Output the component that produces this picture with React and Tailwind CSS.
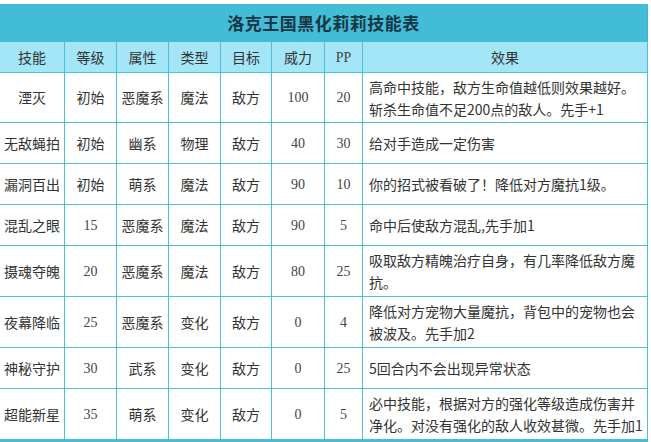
const grid = 'grid grid-cols-[65px_52px_52px_52px_51px_53px_38px_285px]'

const skills = [
  { name: '湮灭', level: '初始', attr: '恶魔系', type: '魔法', target: '敌方', power: '100', pp: '20', effect: ['高命中技能，敌方生命值越低则效果越好。', '斩杀生命值不足200点的敌人。先手+1'], h: 'h-[50px]' },
  { name: '无敌蝇拍', level: '初始', attr: '幽系', type: '物理', target: '敌方', power: '40', pp: '30', effect: ['给对手造成一定伤害'], h: 'h-[41px]' },
  { name: '漏洞百出', level: '初始', attr: '萌系', type: '魔法', target: '敌方', power: '90', pp: '10', effect: ['你的招式被看破了！降低对方魔抗1级。'], h: 'h-[41px]' },
  { name: '混乱之眼', level: '15', attr: '恶魔系', type: '魔法', target: '敌方', power: '90', pp: '5', effect: ['命中后使敌方混乱,先手加1'], h: 'h-[41px]' },
  { name: '摄魂夺魄', level: '20', attr: '恶魔系', type: '魔法', target: '敌方', power: '80', pp: '25', effect: ['吸取敌方精魄治疗自身，有几率降低敌方魔', '抗。'], h: 'h-[51px]' },
  { name: '夜幕降临', level: '25', attr: '恶魔系', type: '变化', target: '敌方', power: '0', pp: '4', effect: ['降低对方宠物大量魔抗，背包中的宠物也会', '被波及。先手加2'], h: 'h-[51px]' },
  { name: '神秘守护', level: '30', attr: '武系', type: '变化', target: '敌方', power: '0', pp: '25', effect: ['5回合内不会出现异常状态'], h: 'h-[41px]' },
  { name: '超能新星', level: '35', attr: '萌系', type: '变化', target: '敌方', power: '0', pp: '5', effect: ['必中技能，根据对方的强化等级造成伤害并', '净化。对没有强化的敌人收效甚微。先手加1'], h: 'h-[50px]' },
]

const headers = ['技能', '等级', '属性', '类型', '目标', '威力', 'PP']

function isNum(s) {
  return /^[0-9A-Z]+$/.test(s)
}

function Cell({ children, last, className = '' }) {
  const txt = typeof children === 'string' && isNum(children)
  return (
    <div
      className={`flex items-center justify-center border-r border-[#4ec0d4] ${last ? '' : 'border-b'} ${
        txt ? "font-['Liberation_Serif'] text-[14px] text-[#444]" : 'text-[14px]'
      } ${className}`}
    >
      {children}
    </div>
  )
}

export default function App() {
  return (
    <div className="w-[651px] h-[442px] bg-white pt-[4px] overflow-hidden font-['Noto_Sans_CJK_SC',sans-serif] text-[#333]">
      <div className="w-[648px] border-b-[3px] border-[#46bcd5]">
        {/* Title */}
        <div className="h-[38px] bg-[#43bdd7] flex items-center justify-center border-r border-[#3fb4cc]">
          <span className="text-[17px] font-bold text-[#163646] tracking-[0.5px]">洛克王国黑化莉莉技能表</span>
        </div>

        {/* Header */}
        <div className={`${grid} h-[31px] bg-[#a2e6f7]`}>
          {headers.map((h) => (
            <Cell key={h}>{h}</Cell>
          ))}
          <Cell>效果</Cell>
        </div>

        {/* Rows */}
        {skills.map((s, i) => {
          const last = i === skills.length - 1
          return (
            <div key={s.name} className={`${grid} ${s.h}`}>
              <Cell last={last}>{s.name}</Cell>
              <Cell last={last}>{s.level}</Cell>
              <Cell last={last}>{s.attr}</Cell>
              <Cell last={last}>{s.type}</Cell>
              <Cell last={last}>{s.target}</Cell>
              <Cell last={last}>{s.power}</Cell>
              <Cell last={last}>{s.pp}</Cell>
              <div
                className={`flex flex-col justify-center pl-[6px] border-r border-[#4ec0d4] ${last ? '' : 'border-b'} text-[14px] leading-[22px] whitespace-nowrap`}
              >
                {s.effect.map((line) => (
                  <span key={line}>{line}</span>
                ))}
              </div>
            </div>
          )
        })}
      </div>
    </div>
  )
}
